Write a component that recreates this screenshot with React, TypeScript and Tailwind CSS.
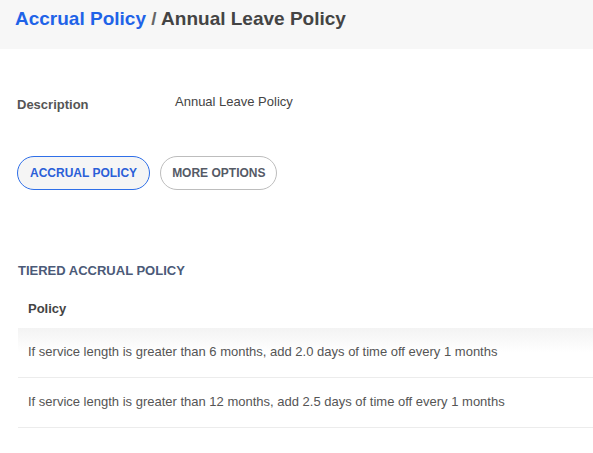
export default function App() {
  const rows = [
    'If service length is greater than 6 months, add 2.0 days of time off every 1 months',
    'If service length is greater than 12 months, add 2.5 days of time off every 1 months',
  ];

  return (
    <div className="min-h-[453px] w-[593px] overflow-hidden bg-white font-['Liberation_Sans',Arial,sans-serif]">
      <div className="flex h-[49px] items-start bg-[#f7f7f7] px-[15px] pt-[7px]">
        <h1 className="text-[19px] font-bold leading-[24px]">
          <span className="text-[#1f63e8]">Accrual Policy</span>
          <span className="text-[#666]"> / </span>
          <span className="text-[#444]">Annual Leave Policy</span>
        </h1>
      </div>

      <div className="flex items-start px-[17px] pt-[43px]">
        <span className="mt-[3px] w-[158px] text-[13px] font-bold text-[#555]">Description</span>
        <span className="text-[13px] text-[#444]">Annual Leave Policy</span>
      </div>

      <div className="mt-[41px] flex gap-[10px] px-[17px]">
        <button
          type="button"
          className="h-[34px] rounded-full border border-[#2f6fe8] bg-[#f5f5f5] px-[12px] text-[12px] font-bold text-[#2b5fd8]"
        >
          ACCRUAL POLICY
        </button>
        <button
          type="button"
          className="h-[34px] rounded-full border border-[#bdbdbd] bg-white px-[11px] text-[12px] font-bold text-[#555a66]"
        >
          MORE OPTIONS
        </button>
      </div>

      <div className="mt-[73px] pl-[18px]">
        <h2 className="text-[13px] font-bold leading-[15px] text-[#4b5a78]">TIERED ACCRUAL POLICY</h2>
        <div className="mt-[12px] w-[620px]">
          <div className="flex h-[38px] items-center px-[10px] text-[13px] font-bold text-[#444]">Policy</div>
          {rows.map((row, i) => (
            <div
              key={row}
              className={`flex h-[50px] items-center border-b border-[#ececec] px-[10px] text-[13px] text-[#555] ${
                i === 0 ? 'bg-gradient-to-b from-[#f3f3f3] via-white to-white' : ''
              }`}
            >
              {row}
            </div>
          ))}
        </div>
      </div>
    </div>
  );
}
